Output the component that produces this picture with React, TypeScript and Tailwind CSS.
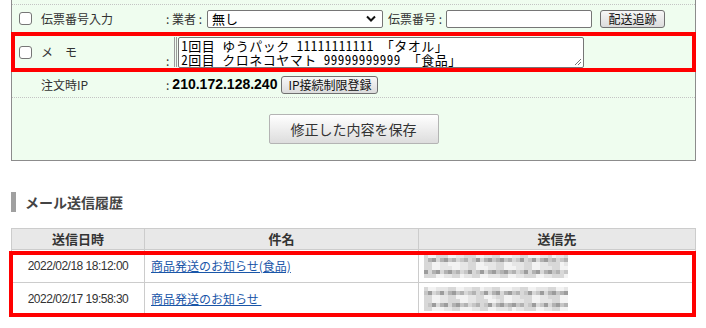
import type { ReactNode } from 'react';

const shades = [
  'bg-[#f3f3f3]',
  'bg-[#e6e6e6]',
  'bg-[#d8d8d8]',
  'bg-[#c6c6c6]',
  'bg-[#b2b2b2]',
  'bg-[#9c9c9c]',
];

function pick(seed: number, r: number, c: number, n: number) {
  const h = Math.imul(seed * 1009 + r * 97 + c * 13 + 7, 2654435761) >>> 0;
  return (h >>> 13) % n;
}

// blurred e-mail address, drawn as a block mosaic
function Mosaic({ seed }: { seed: number }) {
  const rows = [0, 1, 2, 3, 4, 5];
  const cols = Array.from({ length: 36 }, (_, i) => i);
  return (
    <div className="flex flex-col">
      {rows.map((r) => {
        const mid = r % 3 === 1;
        return (
          <div key={r} className="flex h-[4px]">
            {cols.map((c) => {
              const i = mid ? 2 + pick(seed, r, c, 4) : pick(seed, r, c, 3);
              return <div key={c} className={`h-[4px] w-[4px] ${shades[i]}`} />;
            })}
          </div>
        );
      })}
    </div>
  );
}

function Check() {
  return <span className="block h-[13px] w-[13px] shrink-0 rounded-[3px] border border-[#767676] bg-white" />;
}

function Btn({ children, className = '' }: { children: ReactNode; className?: string }) {
  return (
    <span
      className={`flex h-[18px] items-center justify-center rounded-[3px] border border-[#707070] bg-gradient-to-b from-[#f7f7f7] to-[#dcdcdc] text-[12px] leading-none text-[#111] ${className}`}
    >
      {children}
    </span>
  );
}

function FormRow({ label, check, children, className = '' }: { label: string; check?: boolean; children: ReactNode; className?: string }) {
  return (
    <div className={`relative flex items-center ${className}`}>
      <div className={`flex w-[154px] shrink-0 items-center gap-[9px] ${check ? 'pl-[7px]' : 'pl-[29px]'}`}>
        {check && <Check />}
        <span className="text-[12px] text-[#333]">{label}</span>
      </div>
      {children}
    </div>
  );
}

export default function App() {
  return (
    <div className="h-[328px] w-[706px] overflow-hidden bg-white font-['Noto_Sans_CJK_JP',sans-serif] text-[#333]">
      <div className="ml-[11px] w-[685px] border-x border-b border-[#8c8c8c] bg-[#effdef]">
        <div className="h-[5px] border-b border-dotted border-[#c4c4c4]" />

        <FormRow label="伝票番号入力" check className="h-[27px]">
          <span className="w-[41px] text-[12px]">: 業者 :</span>
          <span className="flex h-[18px] w-[176px] items-center justify-between rounded-[2px] border border-[#767676] bg-white pl-[4px] pr-[6px] text-[13px] text-black">
            無し
            <svg width="10" height="7" viewBox="0 0 10 7">
              <path d="M1 1.5 L5 5.5 L9 1.5" fill="none" stroke="#111" strokeWidth="2" />
            </svg>
          </span>
          <span className="ml-[5px] w-[58px] text-[12px]">伝票番号 :</span>
          <span className="h-[18px] w-[146px] rounded-[2px] border border-[#767676] bg-white" />
          <Btn className="ml-[8px] w-[65px]">配送追跡</Btn>
        </FormRow>

        <FormRow label="メ　モ" check className="h-[40px]">
          <span className="self-end pb-[5px] text-[12px] leading-none">:</span>
          <span className="ml-[5px] h-[30px] w-[3px] border-x border-[#9a9a9a]" />
          <div className="relative ml-[1px] h-[31px] w-[406px] rounded-[2px] border border-[#767676] bg-white pl-[2px] pt-px font-['Noto_Sans_Mono_CJK_JP','Liberation_Mono',monospace] text-[13px] leading-[14px] tracking-[0.5px] text-black">
            <div className="h-[14px] whitespace-pre">1回目 ゆうパック 11111111111 「タオル」</div>
            <div className="h-[14px] whitespace-pre">2回目 クロネコヤマト 99999999999 「食品」</div>
            <svg className="absolute bottom-[1px] right-[1px]" width="8" height="8" viewBox="0 0 8 8">
              <path d="M7 1 L1 7 M7 4 L4 7" stroke="#777" strokeWidth="1" />
            </svg>
          </div>
          <div className="pointer-events-none absolute inset-y-0 -left-px -right-px border-4 border-[#ff0000]" />
        </FormRow>

        <FormRow label="注文時IP" className="h-[26px] border-b border-dotted border-[#c4c4c4]">
          <span className="text-[12px]">:</span>
          <span className="ml-[3px] font-['Liberation_Sans',sans-serif] text-[14px] font-bold text-black">210.172.128.240</span>
          <Btn className="ml-[4px] w-[97px]">IP接続制限登録</Btn>
        </FormRow>

        <div className="flex justify-center py-[16px]">
          <span className="flex h-[30px] w-[170px] items-center justify-center rounded-[2px] border border-[#b4b4b4] bg-gradient-to-b from-[#ffffff] to-[#dddddd] text-[14px] text-[#333]">
            修正した内容を保存
          </span>
        </div>
      </div>

      <div className="ml-[11px] mt-[31px] flex h-[20px] items-center">
        <span className="h-[20px] w-[5px] bg-[#a0a0a0]" />
        <span className="ml-[9px] text-[14px] font-bold text-[#444]">メール送信履歴</span>
      </div>

      <div className="ml-[11px] mt-[16px] w-[685px] border border-[#cccccc] text-[12px]">
        <div className="grid h-[21px] grid-cols-[132px_274px_1fr] border-b border-[#cccccc] bg-[#e8e8e8] text-[13px] font-bold text-[#333]">
          <div className="flex items-center justify-center">送信日時</div>
          <div className="flex items-center justify-center border-l border-[#cccccc]">件名</div>
          <div className="flex items-center justify-center border-l border-[#cccccc]">送信先</div>
        </div>
        <div className="relative">
          {[
            { date: '2022/02/18 18:12:00', subject: '商品発送のお知らせ(食品)', seed: 1 },
            { date: '2022/02/17 19:58:30', subject: '商品発送のお知らせ ', seed: 2 },
          ].map((row, i) => (
            <div key={row.seed} className={`grid grid-cols-[132px_274px_1fr] ${i === 0 ? 'h-[33px] border-b border-[#cccccc]' : 'h-[32px]'}`}>
              <div className="flex items-center justify-center font-['Liberation_Sans',sans-serif] tracking-[-0.5px] text-[#333]">
                {row.date}
              </div>
              <div className="flex items-center border-l border-[#cccccc] pl-[6px]">
                <a className="whitespace-pre text-[#1a56a8] underline">{row.subject}</a>
              </div>
              <div className="flex items-center border-l border-[#cccccc] pl-[5px]">
                <Mosaic seed={row.seed} />
              </div>
            </div>
          ))}
          <div className="pointer-events-none absolute -bottom-[2px] -left-[3px] -right-px top-[1px] border-4 border-[#ff0000]" />
        </div>
      </div>
    </div>
  );
}
